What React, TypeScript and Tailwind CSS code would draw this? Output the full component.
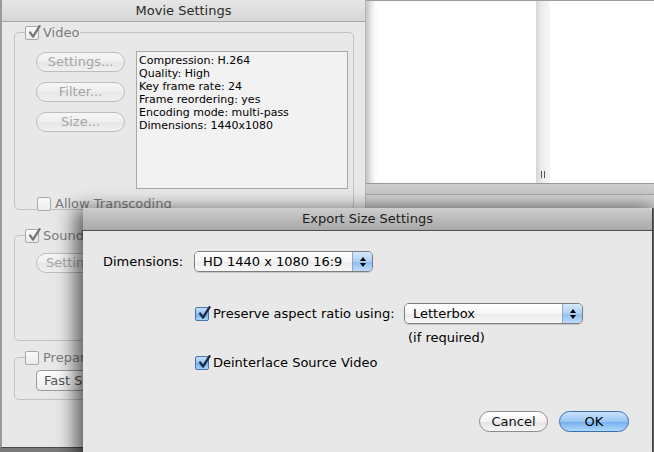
import React from "react";

const Check = ({ color }: { color: string }) => (
  <svg width="15" height="15" viewBox="0 0 15 15" className="absolute left-[1px] -top-[2px] overflow-visible">
    <path d="M3.2 7.6 L6 11.6 L12.6 1.2" fill="none" stroke={color} strokeWidth="2.4" strokeLinecap="round" strokeLinejoin="round" />
  </svg>
);

// gray = disabled checkbox in the movie window, blue = aqua checked box
const Checkbox = ({ checked, blue }: { checked?: boolean; blue?: boolean }) => (
  <div
    className={`relative w-[14px] h-[14px] shrink-0 rounded-[2px] border ${
      blue
        ? "border-[#4a74a8] bg-[linear-gradient(#c8e0fa,#92c0f0_50%,#74aeea_51%,#a8d4fb)]"
        : "border-[#a9a9a9] bg-[linear-gradient(#fafafa,#ececec)]"
    }`}
  >
    {checked && <Check color={blue ? "#1d2a48" : "#777777"} />}
  </div>
);

const PillButton = ({ label, disabled, w }: { label: string; disabled?: boolean; w: string }) => (
  <div
    className={`${w} h-[20px] shrink-0 rounded-full border flex items-center justify-center text-[13px] ${
      disabled
        ? "border-[#bdbdbd] bg-[linear-gradient(#f6f6f6,#eeeeee_50%,#e6e6e6_51%,#f0f0f0)] text-[#a6a6a6]"
        : "border-[#8c8c8c] bg-[linear-gradient(#ffffff,#f2f2f2_50%,#e4e4e4_51%,#f6f6f6)] text-[#111]"
    }`}
  >
    {label}
  </div>
);

const Popup = ({ label, w }: { label: string; w: string }) => (
  <div className={`${w} h-[21px] flex rounded-[5px] border border-[#7d7d7d] overflow-hidden shadow-[0_1px_1px_rgba(0,0,0,0.15)]`}>
    <div className="flex-1 flex items-center pl-[8px] text-[13px] text-black bg-[linear-gradient(#ffffff,#f6f6f6_50%,#ebebeb_51%,#f8f8f8)]">
      {label}
    </div>
    <div className="w-[20px] flex flex-col items-center justify-center gap-[2px] border-l border-[#8aa8cc] bg-[linear-gradient(#d6e9fc,#aed0f4_50%,#8cbcef_51%,#bcdcfd)]">
      <div className="w-0 h-0 border-l-[3px] border-r-[3px] border-b-[4px] border-l-transparent border-r-transparent border-b-black" />
      <div className="w-0 h-0 border-l-[3px] border-r-[3px] border-t-[4px] border-l-transparent border-r-transparent border-t-black" />
    </div>
  </div>
);

const GroupBox = ({
  label,
  checked,
  labelClip,
  className,
  children,
}: {
  label: string;
  checked?: boolean;
  labelClip?: string;
  className: string;
  children?: React.ReactNode;
}) => (
  <div className={`relative mx-[12px] mr-[11px] rounded-[5px] border border-[#c2c2c2] ${className}`}>
    <div className="absolute left-[10px] -top-[8px] flex items-center gap-[4px] bg-[#e8e8e8] pr-[1px]">
      <Checkbox checked={checked} />
      {/* the sheet covers the rest of the longer labels */}
      <span className={`text-[13px] leading-[16px] text-[#7c7c7c] whitespace-nowrap overflow-hidden ${labelClip ?? ""}`}>
        {label}
      </span>
    </div>
    {children}
  </div>
);

const info = [
  "Compression: H.264",
  "Quality: High",
  "Key frame rate: 24",
  "Frame reordering: yes",
  "Encoding mode: multi-pass",
  "Dimensions: 1440x1080",
];

const App = () => {
  return (
    <div className="relative w-[654px] h-[452px] overflow-hidden bg-[#7a7a7a] font-['DejaVu_Sans',sans-serif]">
      {/* window on the right, behind */}
      <div className="absolute left-[366px] top-0 w-[288px] h-[208px] flex flex-col border-t border-[#9c9c9c]">
        <div className="h-[182px] flex bg-white">
          <div className="w-[170px] shadow-[inset_10px_0_9px_-7px_rgba(0,0,0,0.3)]" />
          <div className="w-[14px] flex items-end justify-center gap-[2px] pb-[5px] bg-[linear-gradient(90deg,#d6d6d6,#ececec_40%,#f6f6f6)]">
            <div className="w-[1px] h-[7px] bg-[#555]" />
            <div className="w-[1px] h-[7px] bg-[#555]" />
          </div>
          <div className="flex-1" />
        </div>
        <div className="h-[11px] border-t border-[#9a9a9a] bg-[linear-gradient(#cfcfcf,#c6c6c6)]" />
        <div className="flex-1 border-t border-[#a6a6a6] bg-[linear-gradient(#d2d2d2,#c4c4c4)]" />
      </div>

      {/* Movie Settings window */}
      <div className="absolute left-0 top-0 w-[366px] h-[448px] flex flex-col bg-[#e8e8e8] border-r border-[#b4b4b4] border-b border-b-[#4a4a4a] border-l-2 border-l-[#9a9a9a]">
        <div className="h-[22px] shrink-0 flex items-center justify-center border-b border-[#a9a9a9] bg-[linear-gradient(#e6e6e6,#d6d6d6)] text-[13px] text-[#2a2a2a]">
          Movie Settings
        </div>

        <GroupBox label="Video" checked className="mt-[10px] h-[178px] pt-[18px] pl-[21px]">
          <div className="flex items-start">
            <div className="flex flex-col gap-[10px] mt-[1px]">
              <PillButton label="Settings..." disabled w="w-[89px]" />
              <PillButton label="Filter..." disabled w="w-[89px]" />
              <PillButton label="Size..." disabled w="w-[89px]" />
            </div>
            <div className="ml-[11px] w-[212px] h-[138px] border border-[#a8a8a8] bg-[#f2f2f2] pl-[2px] pt-[2px] text-[11px] leading-[13px] text-black">
              {info.map((line) => (
                <div key={line}>{line}</div>
              ))}
            </div>
          </div>
          <div className="mt-[7px] pl-[1px] flex items-center gap-[4px]">
            <Checkbox />
            <span className="text-[13px] leading-[16px] text-[#7c7c7c]">Allow Transcoding</span>
          </div>
        </GroupBox>

        <GroupBox label="Sound Settings" labelClip="max-w-[41px]" checked className="mt-[25px] h-[106px] pt-[17px] pl-[21px]">
          <div className="w-[47px] overflow-hidden">
            <div className="w-[89px] h-[20px] rounded-full border border-[#bdbdbd] bg-[linear-gradient(#f6f6f6,#eeeeee_50%,#e6e6e6_51%,#f0f0f0)] flex items-center pl-[9px] text-[13px] text-[#a6a6a6] whitespace-nowrap">
              Settin
            </div>
          </div>
        </GroupBox>

        <GroupBox label="Prepare for Internet Streaming" labelClip="max-w-[41px]" className="mt-[16px] h-[43px] pt-[12px] pl-[21px]">
          <div className="w-[47px] overflow-hidden">
            <div className="w-[120px] h-[21px] rounded-[4px] border border-[#9a9a9a] bg-[linear-gradient(#fdfdfd,#ececec)] flex items-center pl-[7px] text-[13px] text-[#555] whitespace-nowrap">
              Fast St
            </div>
          </div>
        </GroupBox>
      </div>

      {/* Export Size Settings sheet */}
      <div className="absolute left-[83px] top-[208px] w-[570px] h-[250px] flex flex-col bg-[#e8e8e8] border-r border-[#3a3f4c] shadow-[-5px_4px_18px_3px_rgba(0,0,0,0.6)] text-[13px] text-black">
        <div className="h-[23px] shrink-0 flex items-center justify-center rounded-tr-[4px] border-b border-[#4e4e4e] bg-[linear-gradient(#cdcdcd,#a9a9a9)] text-[#1c1c1c]">
          Export Size Settings
        </div>

        <div className="flex flex-col pl-[20px] pt-[20px]">
          <div className="flex items-center h-[21px]">
            <span className="w-[91px]">Dimensions:</span>
            <Popup label="HD 1440 x 1080 16:9" w="w-[179px]" />
          </div>

          <div className="flex items-center h-[21px] mt-[31px] pl-[92px]">
            <div className="w-[209px] flex items-center gap-[4px]">
              <Checkbox checked blue />
              <span>Preserve aspect ratio using:</span>
            </div>
            <Popup label="Letterbox" w="w-[179px]" />
          </div>

          <div className="mt-[6px] pl-[305px] leading-[16px]">(if required)</div>

          <div className="mt-[9px] pl-[92px] h-[16px] flex items-center gap-[4px]">
            <Checkbox checked blue />
            <span>Deinterlace Source Video</span>
          </div>

          <div className="mt-[40px] pr-[23px] flex justify-end gap-[11px]">
            <PillButton label="Cancel" w="w-[69px] h-[21px]" />
            <div className="w-[70px] h-[21px] rounded-full border border-[#3f6eaf] flex items-center justify-center bg-[linear-gradient(#cbe3fc,#97c5f4_50%,#72aeee_51%,#aedafd)]">
              OK
            </div>
          </div>
        </div>
      </div>
    </div>
  );
};

export default App;
